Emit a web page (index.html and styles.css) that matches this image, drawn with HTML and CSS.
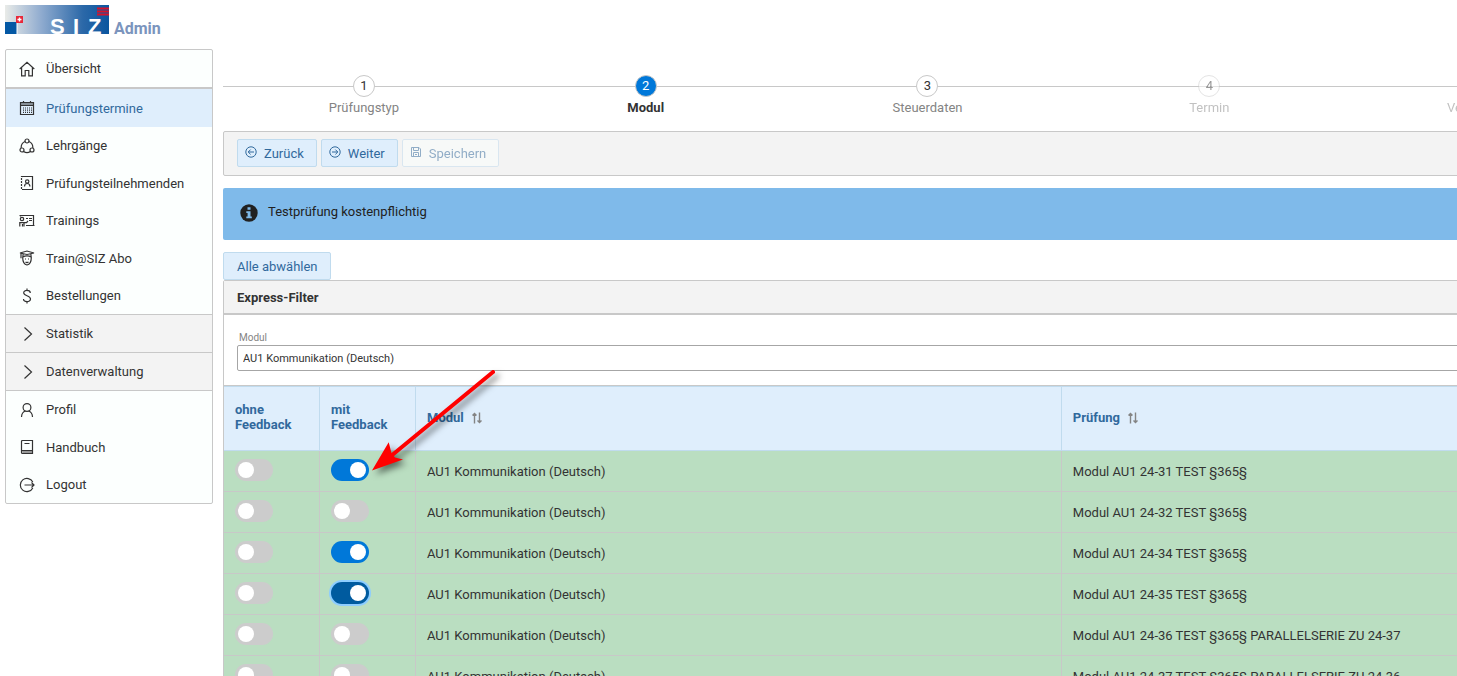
FILE: index.html
```html
<!DOCTYPE html>
<html lang="de">
<head>
<meta charset="utf-8">
<title>SIZ Admin</title>
<link rel="stylesheet" href="styles.css">
</head>
<body>
<header class="brand">
  <svg class="logo" viewBox="0 0 104 30" role="img" aria-label="SIZ">
    <defs>
      <linearGradient id="fade" x1="0" x2="1" y1="0" y2="0">
        <stop offset="0" stop-color="#e9ebe8"/>
        <stop offset="0.35" stop-color="#8fabcf"/>
        <stop offset="0.75" stop-color="#2b68a8"/>
        <stop offset="1" stop-color="#0a559f"/>
      </linearGradient>
    </defs>
    <rect width="104" height="29" fill="url(#fade)"/>
    <path d="M0 17h12v12H0z" fill="#0458a4"/>
    <path d="M12 18v11" stroke="#fff"/>
    <rect x="11" y="11" width="7" height="7" fill="#e8283a"/>
    <path d="M14.500 12.500v4M12.500 14.500h4" stroke="#fff" stroke-width="1.400"/>
    <text class="logo-text" y="29"><tspan x="45">S</tspan><tspan x="68">I</tspan><tspan x="83">Z</tspan></text>
    <path d="M92 3.500h12M92 6.500h12M92 9.500h12" stroke="#d5132c" stroke-width="2"/>
  </svg>
  <span class="brand-name">Admin</span>
</header>
<div class="layout">
  <nav class="menu">
    <ul class="menu-group">
      <li><a class="menu-item" href="#"><svg class="icon" viewBox="0 0 16 16"><path d="M.7 8 8 1.200 15.300 8M2.600 6.500v8.400h3.600V9.500h3.600v5.400h3.600V6.500"/></svg>Übersicht</a></li>
    </ul>
    <ul class="menu-group menu-group-main">
      <li><a class="menu-item active" href="#"><svg class="icon" viewBox="0 0 16 16"><path d="M1.500 2.500h13v12h-13zM1.500 5.500h13M1.500 4h13M4.500 1v2M11.500 1v2"/><path class="dots" d="M4 8h9M4 10.200h9M4 12.400h9"/></svg>Prüfungstermine</a></li>
      <li><a class="menu-item" href="#"><svg class="icon" viewBox="0 0 16 16"><circle cx="8" cy="3" r="2"/><circle cx="3" cy="12" r="2"/><circle cx="13" cy="12" r="2"/><path d="M6.200 3.500C3.500 4.500 2 7 2.200 10M9.800 3.500c2.700 1 4.200 3.500 4 6.500M4.600 13.600c2 1.300 4.800 1.300 6.800 0"/></svg>Lehrgänge</a></li>
      <li><a class="menu-item" href="#"><svg class="icon" viewBox="0 0 16 16"><path d="M2.500 1.500h11v13h-11z"/><path class="tabs" d="M2 2v13"/><circle cx="8.200" cy="6.500" r="1.700"/><path d="M5.500 11.500c0-4 5.400-4 5.400 0"/></svg>Prüfungsteilnehmenden</a></li>
      <li><a class="menu-item" href="#"><svg class="icon" viewBox="0 0 16 16"><path d="M.5 2.500h14v10h1M7 12.500h8.500M1.500 2.500v1"/><circle cx="3" cy="6" r="1.700"/><path d="M.8 13.500V9.700h6.700L9 8M3.500 13.500V11M5 9.700v3.800M7 5.500h2M10 5.500h3M10 7.500h3"/></svg>Trainings</a></li>
      <li><a class="menu-item" href="#"><svg class="icon" viewBox="0 0 16 16"><path d="M1 3 8 1l7 2-7 1.500zM4 4v3c2-1.400 6-1.400 8 0V4M2 3.300v5M3.800 6.500c-.4 5 1.700 8 4.200 8.500 2.500-.5 4.600-3.500 4.200-8.500M6 9h1M9 9h1M6.500 12c1 .7 2 .7 3 0"/></svg>Train@SIZ Abo</a></li>
      <li><a class="menu-item" href="#"><svg class="icon" viewBox="0 0 16 16"><path d="M11.300 5c0-3.300-6.600-3.500-6.600-.2C4.700 8.200 11.500 7.300 11.500 11c0 3.500-7 3.400-7 0M8 .5v2M8 13.500v2"/></svg>Bestellungen</a></li>
    </ul>
    <button class="menu-item menu-toggle" type="button"><svg class="icon" viewBox="0 0 16 16"><path d="m5.500 1.500 7 6.500-7 6.500"/></svg>Statistik</button>
    <button class="menu-item menu-toggle" type="button"><svg class="icon" viewBox="0 0 16 16"><path d="m5.500 1.500 7 6.500-7 6.500"/></svg>Datenverwaltung</button>
    <ul class="menu-group">
      <li><a class="menu-item" href="#"><svg class="icon" viewBox="0 0 16 16"><circle cx="8" cy="5.500" r="3.900"/><path d="M2.500 15c.2-3.500 2-5.500 4-6M13.500 15c-.2-3.500-2-5.500-4-6"/></svg>Profil</a></li>
      <li><a class="menu-item" href="#"><svg class="icon" viewBox="0 0 16 16"><path d="M13.500 11.500v-10h-10q-1 0-1 1v11q0 1 1 1h10v-3h-10q-1 0-1 1M5.500 4.500h5M3.500 13h10"/></svg>Handbuch</a></li>
      <li><a class="menu-item" href="#"><svg class="icon" viewBox="0 0 16 16"><path d="M13.800 5a6.600 6.600 0 1 0 0 6M5.500 8H15M12.500 5.500 15 8l-2.500 2.500"/></svg>Logout</a></li>
    </ul>
  </nav>
  <main class="content">
    <ol class="steps">
      <li class="step"><span class="step-number">1</span><span class="step-label">Prüfungstyp</span></li>
      <li class="step current" aria-current="step"><span class="step-number">2</span><span class="step-label">Modul</span></li>
      <li class="step"><span class="step-number">3</span><span class="step-label">Steuerdaten</span></li>
      <li class="step disabled"><span class="step-number">4</span><span class="step-label">Termin</span></li>
      <li class="step disabled"><span class="step-number">5</span><span class="step-label">Veröffentlichen</span></li>
    </ol>
    <div class="toolbar">
      <button class="button" type="button"><svg class="button-icon" viewBox="0 0 12 12"><circle cx="6" cy="6" r="5.200"/><path d="M9 6H3.200M5.600 3.600 3.200 6l2.400 2.400"/></svg>Zurück</button>
      <button class="button" type="button"><svg class="button-icon" viewBox="0 0 12 12"><circle cx="6" cy="6" r="5.200"/><path d="M3 6h5.800M6.400 3.600 8.800 6 6.400 8.400"/></svg>Weiter</button>
      <button class="button" type="button" disabled><svg class="button-icon" viewBox="0 0 12 12"><path d="M1.500 1.500h7.500l1.500 1.500v7.500h-9zM3.500 1.500v3h5v-3M3.500 10.500v-4h5v4M5 8.500h2"/></svg>Speichern</button>
    </div>
    <div class="notice" role="status">
      <svg class="notice-icon" viewBox="0 0 18 18"><circle cx="9" cy="9" r="8.700" fill="#212121"/><path d="M7.500 3.200h3v2.600h-3zM6.300 7.200h4.200v5.300h1.300v1.800H6.300v-1.800h1.300V9H6.300z" fill="#7fbaea"/></svg>
      <span>Testprüfung kostenpflichtig</span>
    </div>
    <button class="button" type="button">Alle abwählen</button>
    <section class="panel">
      <h2 class="panel-title">Express-Filter</h2>
      <div class="filter">
        <label class="filter-label" for="modul">Modul</label>
        <input class="filter-input" id="modul" type="text" value="AU1 Kommunikation (Deutsch)">
      </div>
      <table class="exams">
        <colgroup><col class="col-switch"><col class="col-switch"><col class="col-module"><col></colgroup>
        <thead>
          <tr>
            <th>ohne<br>Feedback</th>
            <th>mit<br>Feedback</th>
            <th>Modul <svg class="sort" viewBox="0 0 12 12"><path d="M3.500 11.500V1.500M1.500 3.500l2-2 2 2M8.500 .5v10M6.500 8.500l2 2 2-2"/></svg></th>
            <th>Prüfung <svg class="sort" viewBox="0 0 12 12"><path d="M3.500 11.500V1.500M1.500 3.500l2-2 2 2M8.500 .5v10M6.500 8.500l2 2 2-2"/></svg></th>
          </tr>
        </thead>
        <tbody>
          <tr><td><input class="switch" type="checkbox" aria-label="ohne Feedback"></td><td><input class="switch" type="checkbox" aria-label="mit Feedback" checked></td><td>AU1 Kommunikation (Deutsch)</td><td>Modul AU1 24-31 TEST §365§</td></tr>
          <tr><td><input class="switch" type="checkbox" aria-label="ohne Feedback"></td><td><input class="switch" type="checkbox" aria-label="mit Feedback"></td><td>AU1 Kommunikation (Deutsch)</td><td>Modul AU1 24-32 TEST §365§</td></tr>
          <tr><td><input class="switch" type="checkbox" aria-label="ohne Feedback"></td><td><input class="switch" type="checkbox" aria-label="mit Feedback" checked></td><td>AU1 Kommunikation (Deutsch)</td><td>Modul AU1 24-34 TEST §365§</td></tr>
          <tr><td><input class="switch" type="checkbox" aria-label="ohne Feedback"></td><td><input class="switch focused" type="checkbox" aria-label="mit Feedback" checked></td><td>AU1 Kommunikation (Deutsch)</td><td>Modul AU1 24-35 TEST §365§</td></tr>
          <tr><td><input class="switch" type="checkbox" aria-label="ohne Feedback"></td><td><input class="switch" type="checkbox" aria-label="mit Feedback"></td><td>AU1 Kommunikation (Deutsch)</td><td>Modul AU1 24-36 TEST §365§ PARALLELSERIE ZU 24-37</td></tr>
          <tr><td><input class="switch" type="checkbox" aria-label="ohne Feedback"></td><td><input class="switch" type="checkbox" aria-label="mit Feedback"></td><td>AU1 Kommunikation (Deutsch)</td><td>Modul AU1 24-37 TEST §365§ PARALLELSERIE ZU 24-36</td></tr>
        </tbody>
      </table>
      <svg class="pointer" viewBox="0 0 140 120" aria-hidden="true"><path d="M129 6 27 90" stroke="#f00" stroke-width="4" stroke-linecap="round"/><path d="M8 104.500 24.700 76.300 27.500 87l3.500 4.500 8 2z" fill="#f00" stroke="none"/></svg>
    </section>
  </main>
</div>
</body>
</html>
```
FILE: styles.css
```css
* {
  box-sizing: border-box;
}

body {
  margin: 0;
  padding: 5px 0 0 5px;
  height: 100vh;
  overflow: hidden;
  background: #fff;
  color: #333;
  font: 13px/15px Roboto, sans-serif;
}

ul,
ol {
  list-style: none;
  margin: 0;
  padding: 0;
}

svg {
  fill: none;
  stroke: currentColor;
  flex: none;
}

.brand {
  display: flex;
  align-items: flex-start;
  gap: 5px;
  height: 34px;
}

.logo {
  width: 104px;
  height: 30px;
  overflow: visible;
  stroke: none;
}

.logo-text {
  fill: #fff;
  font: bold 22px "Liberation Sans", sans-serif;
}

.brand-name {
  margin-top: 14px;
  color: #7b94bd;
  font-size: 16px;
  font-weight: bold;
  line-height: 20px;
}

.layout {
  display: flex;
  align-items: flex-start;
  gap: 10px;
  margin-top: 10px;
}

.menu {
  flex: none;
  width: 208px;
  background: #fcfffe;
  border: 1px solid #c8c8c8;
  border-radius: 2px;
}

.menu-item {
  display: flex;
  align-items: center;
  gap: 11px;
  width: 100%;
  height: 37px;
  padding: 0 13px;
  border: 0;
  background: none;
  color: #333;
  font: inherit;
  text-decoration: none;
}

.menu-group > :nth-child(even) .menu-item {
  height: 38px;
}

.menu-group-main {
  border-top: 2px solid #c8c8c8;
}

.menu-group-main > :nth-child(odd) .menu-item {
  height: 38px;
}

.menu-group-main > :nth-child(even) .menu-item {
  height: 37px;
}

.menu-item.active {
  background: #dfeefc;
  color: #31699c;
}

.menu-item.active .icon {
  color: #333;
}

.menu-toggle {
  height: 38px;
  background: #f3f3f3;
  border-top: 1px solid #c8c8c8;
}

.menu-toggle + .menu-group {
  border-top: 1px solid #c8c8c8;
}

.icon {
  width: 16px;
  height: 16px;
  stroke-width: 1.2;
}

.dots {
  stroke-dasharray: 1 1;
}

.tabs {
  stroke: #fcfffe;
  stroke-dasharray: 1 2;
  stroke-width: 2;
}

.content {
  flex: 1;
  min-width: 1409px;
}

.steps {
  display: flex;
  padding: 26px 0 16px;
}

.step {
  position: relative;
  flex: 1;
  display: flex;
  flex-direction: column;
  align-items: center;
  gap: 3px;
}

.step::before {
  content: "";
  position: absolute;
  top: 11px;
  width: 100%;
  border-top: 1px solid #c8c8c8;
}

.step-number {
  position: relative;
  width: 22px;
  height: 22px;
  border: 1px solid #c8c8c8;
  border-radius: 50%;
  background: #fff;
  line-height: 20px;
  text-align: center;
}

.step-label {
  color: #848484;
}

.current .step-number {
  background: #0078d9;
  color: #fff;
}

.current .step-label {
  color: #333;
  font-weight: bold;
}

.disabled > span {
  opacity: 0.5;
}

.toolbar {
  display: flex;
  gap: 4px;
  padding: 7px 13px 8px;
  background: #f3f3f3;
  border: 1px solid #c8c8c8;
  border-radius: 2px;
}

.button {
  display: inline-flex;
  align-items: center;
  gap: 7px;
  height: 28px;
  padding: 0 12px 0 13px;
  border: 1px solid #c0dbee;
  border-radius: 2px;
  background: #dfeefc;
  color: #31699c;
  font: inherit;
}

.toolbar .button {
  padding: 0 12px 0 7px;
}

.button:disabled {
  background: #fcfffe;
  opacity: 0.5;
}

.button-icon {
  width: 12px;
  height: 12px;
  margin-bottom: 2px;
}

.notice {
  display: flex;
  gap: 10px;
  height: 52px;
  margin: 12px 0;
  padding: 16px 17px;
  background: #7fbaea;
  border-radius: 2px;
  color: #212121;
}

.notice-icon {
  width: 18px;
  height: 18px;
  stroke: none;
}

.content > .button {
  display: flex;
}

.panel {
  position: relative;
  border: 1px solid #c8c8c8;
  border-radius: 2px;
}

.panel-title {
  margin: 0;
  padding: 9px 13px 8px;
  background: #f3f3f3;
  border-bottom: 2px solid #c8c8c8;
  font-size: 13px;
  line-height: 15px;
}

.filter {
  display: flex;
  flex-direction: column;
  padding: 16px 13px 14px;
}

.filter-label {
  padding: 0 2px;
  color: #848484;
  font-size: 10px;
  line-height: 14px;
}

.filter-input {
  height: 26px;
  padding: 0 5px;
  border: 1px solid #a6a6a6;
  border-radius: 2px;
  background: #fff;
  color: #333;
  font: 11px/16px Roboto, sans-serif;
}

.exams {
  width: 100%;
  table-layout: fixed;
  border-spacing: 0;
  border-top: 1px solid #c8c8c8;
}

.col-switch {
  width: 96px;
}

.col-module {
  width: 45.9%;
}

.exams th {
  height: 65px;
  padding: 0 11px 3px;
  border: solid #c0dbee;
  border-width: 1px 1px 1px 0;
  background: #dfeefc;
  color: #31699c;
  text-align: left;
}

.exams td {
  height: 41px;
  padding: 0 11px;
  border: solid #c8c8c8;
  border-width: 0 1px 1px 0;
  background: #badec1;
}

.sort {
  width: 12px;
  height: 12px;
  margin-left: 4px;
  vertical-align: -2px;
  color: #848484;
  stroke-width: 1.4;
}

.switch {
  appearance: none;
  display: block;
  width: 38px;
  height: 22px;
  margin: 0 0 2px;
  padding: 3px;
  border-radius: 11px;
  background: #ccc;
}

.switch::before {
  content: "";
  display: block;
  width: 16px;
  height: 16px;
  border-radius: 50%;
  background: #fff;
}

.switch:checked {
  background: #0078d9;
}

.switch:checked::before {
  margin-left: 16px;
}

.switch.focused {
  background: #005b9f;
  box-shadow: 0 0 0 2px #8dcdff;
}

.pointer {
  position: absolute;
  top: 85px;
  left: 140px;
  width: 140px;
  height: 120px;
  filter: drop-shadow(4px 4px 3px rgba(0, 0, 0, 0.5));
  pointer-events: none;
}
```
